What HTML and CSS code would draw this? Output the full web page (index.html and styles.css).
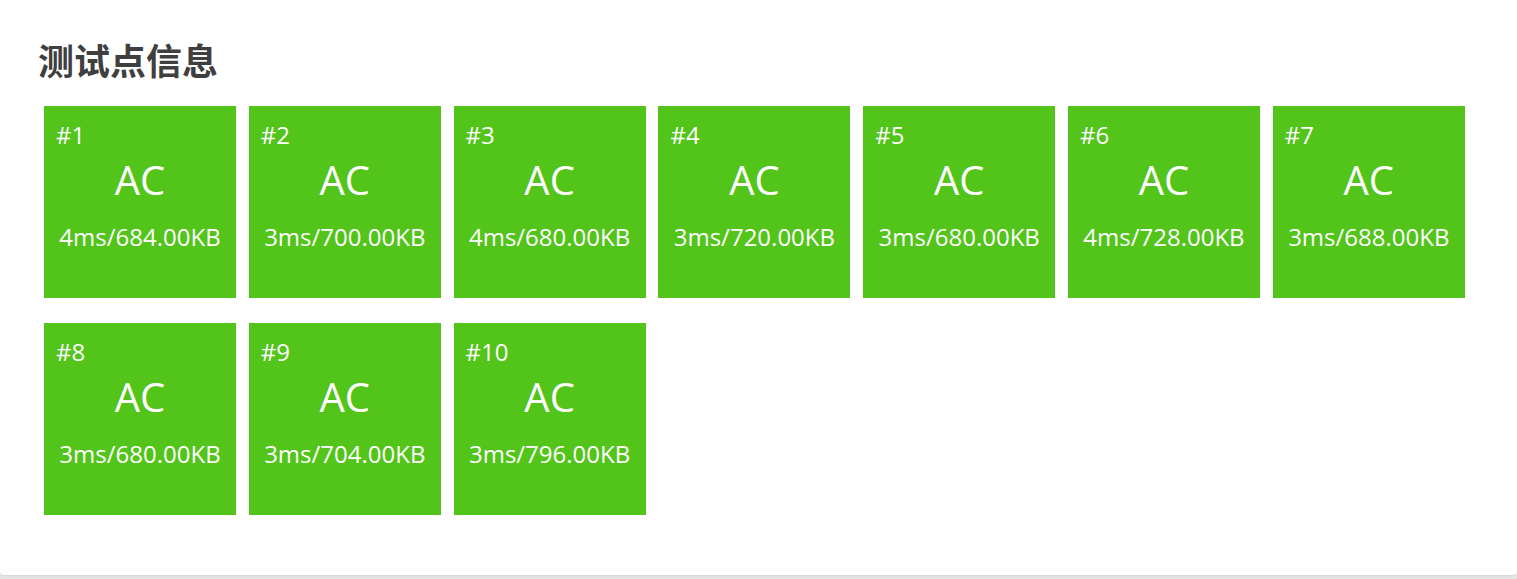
FILE: index.html
```html
<!DOCTYPE html>
<html lang="zh-CN">
<head>
<meta charset="utf-8">
<title>测试点信息</title>
<link rel="stylesheet" href="styles.css">
</head>
<body>
<div class="panel">
  <h3 class="panel-title">测试点信息</h3>
  <div class="cases">
    <div class="case"><div class="case-id">#1</div><div class="case-status">AC</div><div class="case-detail">4ms/684.00KB</div></div>
    <div class="case"><div class="case-id">#2</div><div class="case-status">AC</div><div class="case-detail">3ms/700.00KB</div></div>
    <div class="case"><div class="case-id">#3</div><div class="case-status">AC</div><div class="case-detail">4ms/680.00KB</div></div>
    <div class="case"><div class="case-id">#4</div><div class="case-status">AC</div><div class="case-detail">3ms/720.00KB</div></div>
    <div class="case"><div class="case-id">#5</div><div class="case-status">AC</div><div class="case-detail">3ms/680.00KB</div></div>
    <div class="case"><div class="case-id">#6</div><div class="case-status">AC</div><div class="case-detail">4ms/728.00KB</div></div>
    <div class="case"><div class="case-id">#7</div><div class="case-status">AC</div><div class="case-detail">3ms/688.00KB</div></div>
    <div class="case"><div class="case-id">#8</div><div class="case-status">AC</div><div class="case-detail">3ms/680.00KB</div></div>
    <div class="case"><div class="case-id">#9</div><div class="case-status">AC</div><div class="case-detail">3ms/704.00KB</div></div>
    <div class="case"><div class="case-id">#10</div><div class="case-status">AC</div><div class="case-detail">3ms/796.00KB</div></div>
  </div>
</div>
</body>
</html>
```

FILE: styles.css
```css
html, body {
  margin: 0;
  padding: 0;
}
body {
  background: #e6e6e6;
  font-family: "Open Sans", "Noto Sans CJK SC", sans-serif;
  height: 579px;
  overflow: hidden;
}
.panel {
  background: #fff;
  border-radius: 0 0 4px 4px;
  box-shadow: 0 1px 2px rgba(0, 0, 0, 0.08);
  height: 575px;
  box-sizing: border-box;
  padding: 37px 38px 0 38px;
}
.panel-title {
  margin: 0;
  font-family: "Noto Sans CJK SC", sans-serif;
  font-size: 36px;
  line-height: 44px;
  font-weight: 700;
  color: #3f3f3f;
}
.cases {
  display: grid;
  grid-template-columns: repeat(7, 192px);
  column-gap: 12.8px;
  row-gap: 25px;
  margin: 25px 0 0 6px;
}
.case {
  width: 192px;
  height: 192px;
  box-sizing: border-box;
  background: #52c41a;
  color: #fff;
  padding: 14px 10px 0 12px;
}
.case-id {
  font-size: 24px;
  line-height: 30px;
}
.case-status {
  font-size: 40px;
  line-height: 48px;
  text-align: center;
  margin: 6px -10px 0 -12px;
}
.case-detail {
  font-size: 24px;
  line-height: 30px;
  text-align: center;
  margin: 18px -10px 0 -12px;
}
```
